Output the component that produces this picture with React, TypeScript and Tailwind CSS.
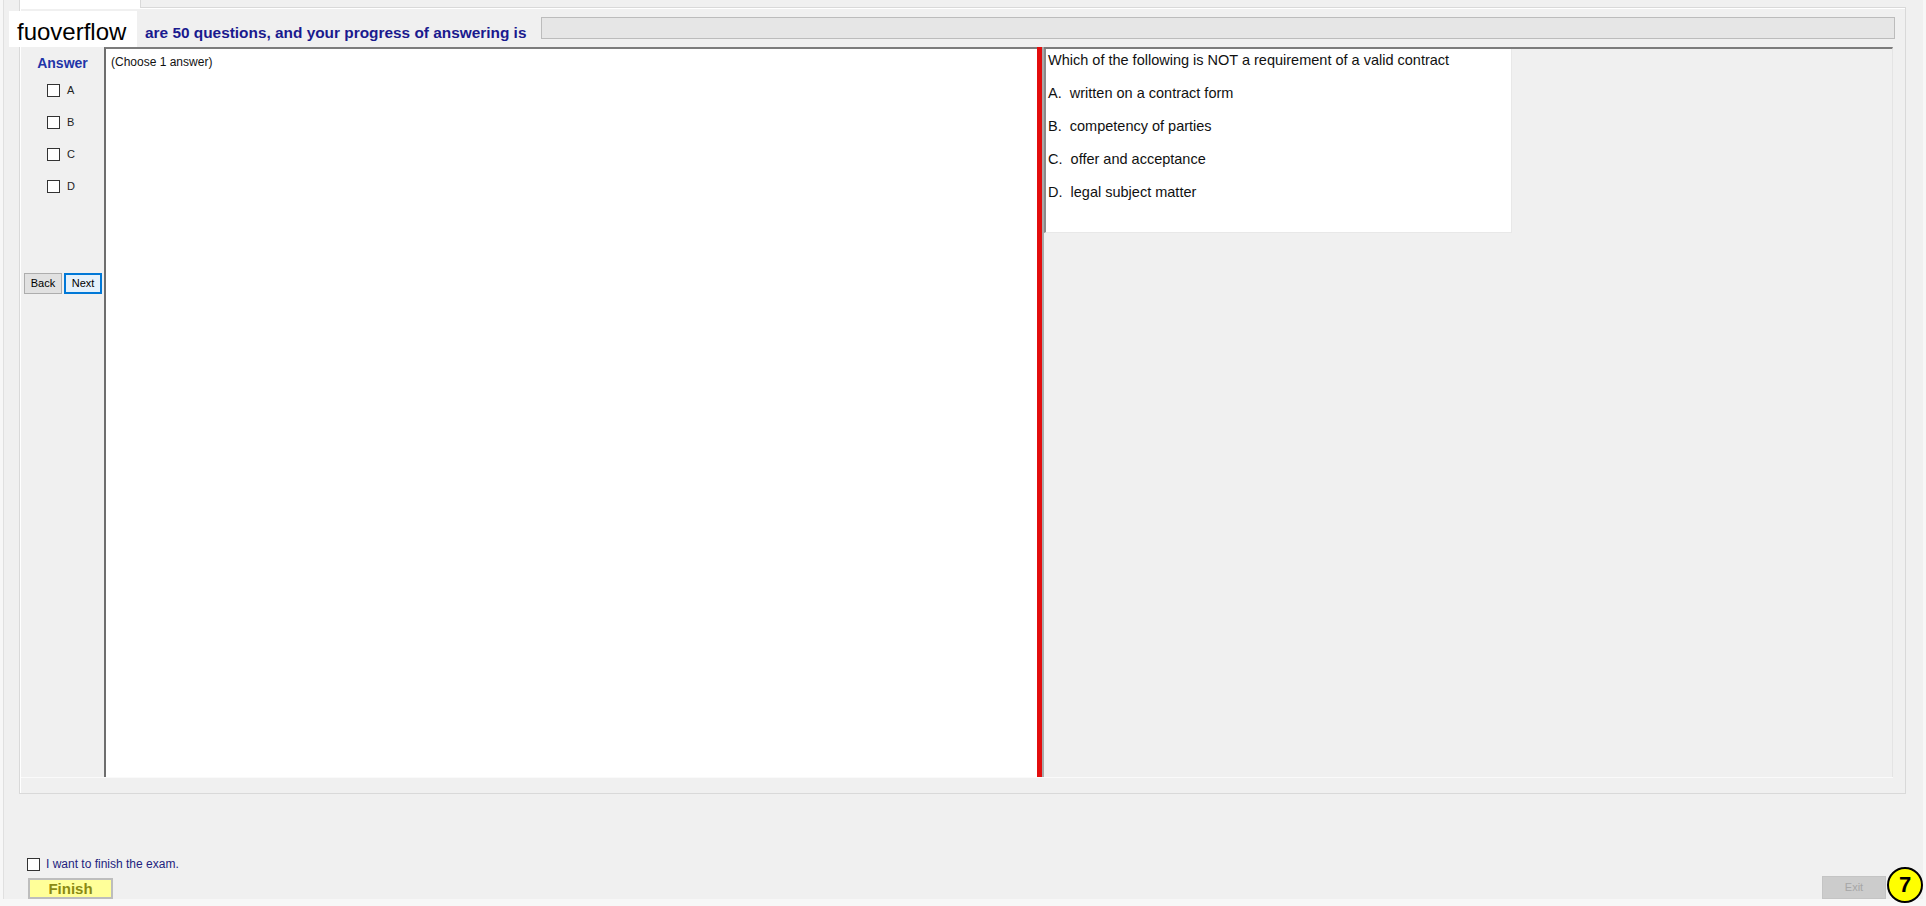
import { useState } from "react";

const OPTIONS = ["A", "B", "C", "D"];

const CHOICES = [
  { key: "A", text: "written on a contract form" },
  { key: "B", text: "competency of parties" },
  { key: "C", text: "offer and acceptance" },
  { key: "D", text: "legal subject matter" },
];

function Box({ checked, onClick }: { checked: boolean; onClick: () => void }) {
  return (
    <button
      type="button"
      onClick={onClick}
      className="flex h-[13px] w-[13px] items-center justify-center border border-[#333] bg-white"
    >
      {checked && <span className="h-[7px] w-[7px] bg-[#333]" />}
    </button>
  );
}

export default function App() {
  const [picked, setPicked] = useState<string[]>([]);
  const [finish, setFinish] = useState(false);

  function toggle(k: string) {
    setPicked((p) => (p.includes(k) ? p.filter((x) => x !== k) : [...p, k]));
  }

  return (
    <div className="relative flex h-[906px] w-[1926px] flex-col overflow-hidden bg-[#f7f7f7] pl-[3px] font-['Liberation_Sans',Arial,sans-serif] text-black">
      <div className="flex h-[899px] w-[1920px] flex-col border-l border-[#e0e0e0] bg-[#f0f0f0] pl-[15px] pr-[17px]">
        {/* tab strip */}
        <div className="relative z-10 -mb-px h-[8px] w-[122px] border-x border-[#d9d9d9] bg-white" />
        <div className="flex h-[787px] flex-col border border-[#d9d9d9] bg-[#f0f0f0]">
          <div className="flex h-[785px] flex-col border-l border-t border-white">
            {/* progress header */}
            <div className="mt-[8px] flex h-[22px] items-start">
              <div className="w-[520px] pl-[124px] pt-[7px] text-[15.4px] font-bold leading-[18px] text-[#1a1a8e]">
                are 50 questions, and your progress of answering is
              </div>
              <div className="mr-[10px] h-[22px] flex-1 border border-[#bcbcbc] bg-[#e6e6e6]" />
            </div>

            {/* answer column + panels */}
            <div className="mt-[8px] flex h-[731px] border-b border-[#fafafa] mr-[12px]">
              <div className="flex w-[83px] flex-col">
                <div className="pt-[8px] text-center text-[14px] font-bold leading-[16px] text-[#1f35a8]">
                  Answer
                </div>
                {OPTIONS.map((o, i) => (
                  <div
                    key={o}
                    className={`flex h-[13px] items-center gap-[7px] pl-[26px] ${i === 0 ? "mt-[13px]" : "mt-[19px]"}`}
                  >
                    <Box checked={picked.includes(o)} onClick={() => toggle(o)} />
                    <span className="text-[11px] leading-[13px] text-[#222]">{o}</span>
                  </div>
                ))}
                <div className="mt-[80px] flex gap-[2px] pl-[3px]">
                  <button
                    type="button"
                    className="h-[21px] w-[38px] border border-[#adadad] bg-[#e1e1e1] text-[11px] text-black"
                  >
                    Back
                  </button>
                  <button
                    type="button"
                    className="h-[21px] w-[38px] border-2 border-[#0078d7] bg-[#e5f1fb] text-[11px] text-black"
                  >
                    Next
                  </button>
                </div>
              </div>

              <div className="w-[933px] border-l-2 border-t-2 border-l-[#6e6e6e] border-t-[#7c7c7c] bg-white pl-[5px] pt-[6px] text-[12px] leading-[14px] text-[#111]">
                (Choose 1 answer)
              </div>

              {/* splitter */}
              <div className="w-[5px] bg-[#e30d0d]" />
              <div className="w-[2px] bg-[#a9a9a9]" />

              <div className="flex-1 border-r border-t-2 border-r-[#e4e4e4] border-t-[#7c7c7c] bg-[#f0f0f0]">
                <div className="flex h-[184px] w-[468px] flex-col gap-[16px] border-b border-l-2 border-r border-b-[#e8e8e8] border-l-[#8a8a8a] border-r-[#e8e8e8] bg-white pl-[2px] pt-[3px] text-[14.5px] leading-[17px] text-[#111]">
                  <div>Which of the following is NOT a requirement of a valid contract</div>
                  {CHOICES.map((c) => (
                    <div key={c.key} className="whitespace-pre">
                      {c.key}.{"  "}
                      {c.text}
                    </div>
                  ))}
                </div>
              </div>
            </div>
          </div>
        </div>

        {/* finish controls */}
        <div className="mt-[63px] flex items-center gap-[6px] pl-[8px]">
          <Box checked={finish} onClick={() => setFinish(!finish)} />
          <span className="text-[12px] leading-[14px] text-[#23237e]">I want to finish the exam.</span>
        </div>
        <div className="mt-[5px] flex items-end justify-between pl-[9px] pr-[20px]">
          <button
            type="button"
            className="h-[21px] w-[85px] border-2 border-[#bdbdbd] bg-[#ffff99] text-[15px] font-bold leading-[17px] text-[#8a8a12]"
          >
            Finish
          </button>
          <button
            type="button"
            disabled
            className="h-[23px] w-[64px] border border-[#c4c4c4] bg-[#cccccc] text-[11px] text-[#a6a6a6]"
          >
            Exit
          </button>
        </div>
      </div>

      {/* watermark label */}
      <div className="absolute left-[9px] top-[11px] flex h-[36px] w-[128px] items-center bg-white pl-[8px] pt-[6px] text-[24px] leading-[28px] text-black">
        fuoverflow
      </div>

      {/* step badge */}
      <div className="absolute left-[1887px] top-[867px] flex h-[36px] w-[36px] items-center justify-center rounded-full border-2 border-black bg-[#ffff00] text-[22px] font-bold leading-none text-black">
        7
      </div>
    </div>
  );
}
